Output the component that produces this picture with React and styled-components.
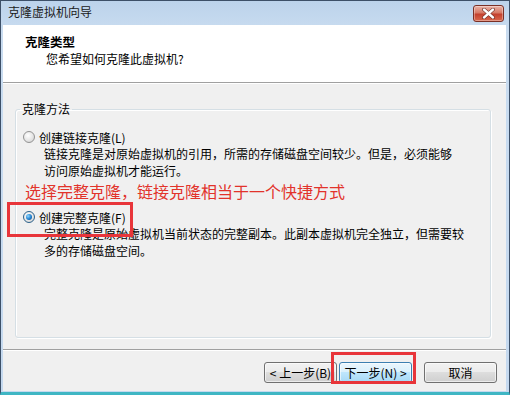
import styled, { createGlobalStyle } from "styled-components";

const GlobalStyle = createGlobalStyle`
  html, body {
    margin: 0;
    padding: 0;
    background: #ffffff;
  }
  * {
    box-sizing: border-box;
  }
`;

const FONT = `"Noto Sans CJK SC", "DejaVu Sans", sans-serif`;

const Window = styled.div`
  width: 510px;
  height: 395px;
  display: flex;
  flex-direction: column;
  background: linear-gradient(#bcd3eb, #c9dcf0 30px, #c5d9ef);
  border: 1px solid #3d5068;
  border-bottom: 3px solid #3fb6c4;
  font-family: ${FONT};
  font-size: 12px;
  color: #000;
`;

const TitleBar = styled.div`
  height: 24px;
  display: flex;
  justify-content: space-between;
  align-items: flex-start;
  padding-left: 7px;
`;

const Title = styled.span`
  line-height: 22px;
  color: #1a1a1a;
  font-size: 12px;
`;

const CloseButton = styled.div`
  width: 31px;
  height: 17px;
  margin: 4px 5px 0 0;
  border: 1px solid #7a3026;
  border-radius: 3px;
  background: linear-gradient(#eab3a6, #d77a66 45%, #c4412e 55%, #d9684d);
  display: flex;
  align-items: center;
  justify-content: center;
  box-shadow: inset 0 0 0 1px rgba(255, 255, 255, 0.35);
`;

const Client = styled.div`
  flex: 1;
  display: flex;
  flex-direction: column;
  margin: 0 3px 1px 2px;
  background: #f0f0f0;
`;

const Header = styled.div`
  height: 58px;
  background: #ffffff;
  padding: 8px 0 0 22px;
  border-bottom: 1px solid #a0a0a0;
  box-shadow: 0 1px 0 #ffffff;
`;

const HeaderTitle = styled.div`
  font-weight: bold;
  line-height: 17px;
  font-size: 12.5px;
`;

const HeaderSub = styled.div`
  line-height: 17px;
  padding-left: 21px;
`;

const Body = styled.div`
  flex: 1;
  display: flex;
  flex-direction: column;
  padding: 19px 15px 11px 12px;
`;

const Group = styled.fieldset`
  flex: 1;
  margin: 0;
  padding: 0 8px 0 7px;
  border: 1px solid #d5dfe5;
  border-radius: 3px;
  box-shadow: 1px 1px 0 #ffffff inset, 1px 1px 0 #ffffff;
`;

const Legend = styled.legend`
  padding: 0 2px;
  margin-left: -3px;
  line-height: 14px;
`;

const Option = styled.div`
  position: relative;
  display: flex;
  align-items: center;
  gap: 4px;
  height: 16px;
  margin-top: ${(p) => p.$top}px;
`;

const Radio = styled.span`
  width: 12px;
  height: 12px;
  border-radius: 50%;
  border: 1px solid ${(p) => (p.$checked ? "#2c628b" : "#939393")};
  background: radial-gradient(circle at 40% 35%, #ffffff, #e3e3e3 60%, #c9c9c9);
  display: flex;
  align-items: center;
  justify-content: center;

  &::after {
    content: "";
    display: ${(p) => (p.$checked ? "block" : "none")};
    width: 6px;
    height: 6px;
    border-radius: 50%;
    background: radial-gradient(circle at 35% 35%, #8fd8ff, #1f7fcf 55%, #12457f);
  }
`;

const Description = styled.div`
  padding-left: 21px;
  line-height: 17px;
`;

const Note = styled.div`
  margin-top: 2px;
  padding-left: 2px;
  font-size: 16px;
  line-height: 20px;
  color: #e2332b;
`;

const Highlight = styled.div`
  position: absolute;
  left: ${(p) => p.$left}px;
  top: ${(p) => p.$top}px;
  width: ${(p) => p.$width}px;
  height: ${(p) => p.$height}px;
  border: 3px solid #e8353a;
  pointer-events: none;
`;

const Footer = styled.div`
  height: 42px;
  border-top: 1px solid #a0a0a0;
  box-shadow: inset 0 1px 0 #ffffff;
  display: flex;
  justify-content: flex-end;
  align-items: flex-start;
  padding: 12px 9px 0 0;
`;

const ButtonWrap = styled.div`
  position: relative;
  margin-left: ${(p) => p.$gap}px;
`;

const Button = styled.div`
  width: 73px;
  height: 21px;
  border: 1px solid ${(p) => (p.$focused ? "#3c7fb1" : "#707070")};
  border-radius: 3px;
  background: ${(p) =>
    p.$focused
      ? "linear-gradient(#eaf6fd, #d9f0fc 50%, #bee6fd 50%, #a7d9f5)"
      : "linear-gradient(#f2f2f2, #ebebeb 50%, #dddddd 50%, #cfcfcf)"};
  box-shadow: inset 0 0 0 1px rgba(255, 255, 255, 0.6);
  display: flex;
  align-items: center;
  justify-content: center;
  line-height: 19px;
  font-size: 12px;
  white-space: nowrap;
`;

export default function App() {
  return (
    <>
      <GlobalStyle />
      <Window>
        <TitleBar>
          <Title>克隆虚拟机向导</Title>
          <CloseButton>
            <svg width="13" height="11" viewBox="0 0 13 11">
              <path
                d="M2 1.5 L11 9.5 M11 1.5 L2 9.5"
                stroke="#5a1d15"
                strokeWidth="3.6"
                strokeLinecap="round"
              />
              <path
                d="M2 1.5 L11 9.5 M11 1.5 L2 9.5"
                stroke="#ffffff"
                strokeWidth="2.4"
                strokeLinecap="round"
              />
            </svg>
          </CloseButton>
        </TitleBar>
        <Client>
          <Header>
            <HeaderTitle>克隆类型</HeaderTitle>
            <HeaderSub>您希望如何克隆此虚拟机?</HeaderSub>
          </Header>
          <Body>
            <Group>
              <Legend>克隆方法</Legend>
              <Option $top={13}>
                <Radio />
                <span>创建链接克隆(L)</span>
              </Option>
              <Description>
                链接克隆是对原始虚拟机的引用，所需的存储磁盘空间较少。但是，必须能够
                <br />
                访问原始虚拟机才能运行。
              </Description>
              <Note>选择完整克隆，链接克隆相当于一个快捷方式</Note>
              <Option $top={8}>
                <Radio $checked />
                <span>创建完整克隆(F)</span>
                <Highlight $left={-16} $top={-7} $width={126} $height={35} />
              </Option>
              <Description>
                完整克隆是原始虚拟机当前状态的完整副本。此副本虚拟机完全独立，但需要较
                <br />
                多的存储磁盘空间。
              </Description>
            </Group>
          </Body>
          <Footer>
            <ButtonWrap $gap={0}>
              <Button>&lt; 上一步(B)</Button>
            </ButtonWrap>
            <ButtonWrap $gap={2}>
              <Button $focused>下一步(N) &gt;</Button>
              <Highlight $left={-8} $top={-10} $width={85} $height={32} />
            </ButtonWrap>
            <ButtonWrap $gap={12}>
              <Button>取消</Button>
            </ButtonWrap>
          </Footer>
        </Client>
      </Window>
    </>
  );
}
